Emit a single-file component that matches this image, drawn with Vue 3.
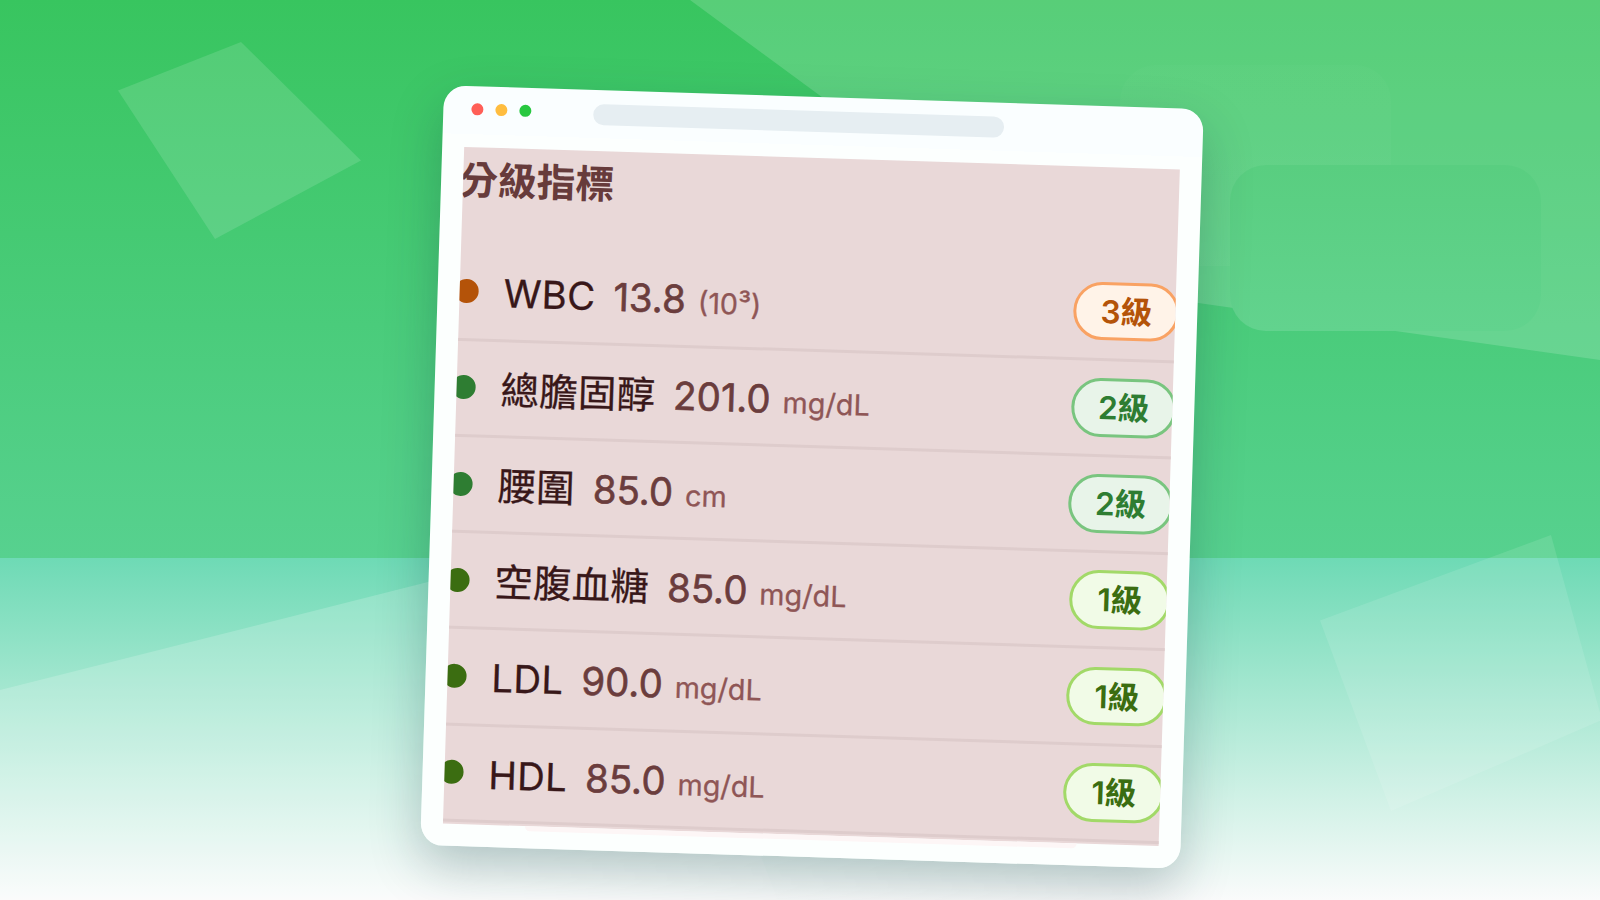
<template>
    <div class="scene">
        <svg class="backdrop" viewBox="0 0 1600 900" aria-hidden="true">
            <defs>
                <linearGradient id="sky" x1="0" y1="0" x2="0" y2="1">
                    <stop offset="0" stop-color="#38c55f" />
                    <stop offset="1" stop-color="#57d18f" />
                </linearGradient>
                <linearGradient id="floor" x1="0" y1="0" x2="0" y2="1">
                    <stop offset="0" stop-color="#6edab5" />
                    <stop offset="1" stop-color="#fafbfb" />
                </linearGradient>
                <linearGradient id="block" x1="0" y1="0" x2="0" y2="1">
                    <stop offset="0" stop-color="#59ce80" />
                    <stop offset="1" stop-color="#62d38e" />
                </linearGradient>
                <linearGradient id="haze" x1="0" y1="0" x2="0" y2="1">
                    <stop offset="0" stop-color="#fff" stop-opacity="0.015" />
                    <stop offset="1" stop-color="#fff" stop-opacity="0.03" />
                </linearGradient>
            </defs>
            <rect width="1600" height="558" fill="url(#sky)" />
            <rect y="558" width="1600" height="342" fill="url(#floor)" />
            <polygon points="690,0 1079,286 1600,360 1600,0" fill="#fff" opacity="0.16" />
            <polygon points="118,90.5 241,42 361,160.5 215,239" fill="#fff" opacity="0.13" />
            <polygon points="0,690 634,530 778,900 0,900" fill="#fff" opacity="0.19" />
            <polygon points="1320,620.5 1551,535 1602,720 1391,811" fill="#fff" opacity="0.11" />
            <rect x="1120" y="65" width="271" height="201" rx="36" fill="url(#haze)" />
            <rect x="1230" y="165" width="311" height="166" rx="36" fill="url(#block)" />
        </svg>

        <div class="window">
            <div class="titlebar">
                <span class="light red"></span>
                <span class="light yellow"></span>
                <span class="light green"></span>
                <span class="address"></span>
            </div>
            <div class="panel">
                <h2 class="title">分級指標</h2>
                <ul class="list">
                    <li v-for="item in items" :key="item.name" class="row" :class="`level-${item.level}`">
                        <span class="dot"></span>
                        <span class="name">{{ item.name }}</span>
                        <span class="value">{{ item.value }}</span>
                        <span class="unit">{{ item.unit }}</span>
                        <span class="badge">{{ item.level }}級</span>
                    </li>
                </ul>
            </div>
            <div class="sheet"></div>
        </div>
    </div>
</template>

<script setup>
const items = [
    { name: 'WBC', value: '13.8', unit: '(10³)', level: 3 },
    { name: '總膽固醇', value: '201.0', unit: 'mg/dL', level: 2 },
    { name: '腰圍', value: '85.0', unit: 'cm', level: 2 },
    { name: '空腹血糖', value: '85.0', unit: 'mg/dL', level: 1 },
    { name: 'LDL', value: '90.0', unit: 'mg/dL', level: 1 },
    { name: 'HDL', value: '85.0', unit: 'mg/dL', level: 1 },
];
</script>

<style scoped>
.scene {
    position: relative;
    box-sizing: border-box;
    width: 1600px;
    height: 900px;
    padding: 96.5px 0 0 431.5px;
    overflow: hidden;
    font-family: Inter, 'Noto Sans CJK TC', sans-serif;
}

.backdrop {
    position: absolute;
    inset: 0;
    width: 1600px;
    height: 900px;
}

.window {
    position: relative;
    box-sizing: border-box;
    width: 760px;
    height: 760px;
    padding: 0 22px;
    border-radius: 22px;
    background: linear-gradient(#fafeff 48px, #fcfffe 48px);
    box-shadow: 0 20px 50px rgba(20, 50, 60, 0.26);
    transform: rotate(1.8deg);
}

.titlebar {
    display: flex;
    align-items: center;
    box-sizing: border-box;
    gap: 12px;
    height: 48px;
    margin-bottom: 13.2px;
    padding: 0 6px 2px;
}

.light {
    width: 12px;
    height: 12px;
    border-radius: 50%;
}

.red {
    background: #ff5f57;
}

.yellow {
    background: #ffbd3f;
}

.green {
    background: #28c840;
}

.address {
    width: 411px;
    height: 21px;
    margin: 2px 0 0 50px;
    border-radius: 11px;
    background: #e6eef2;
}

.panel {
    height: 676.8px;
    overflow: hidden;
    background: #e9d8d8;
}

.title {
    height: 97.2px;
    margin: 0 0 0 -4px;
    color: #673b3b;
    font-size: 38.8px;
    font-weight: 700;
    line-height: 66px;
}

.list {
    margin: 0 -4px 0 -5px;
    padding: 0;
    list-style: none;
}

.row {
    display: flex;
    align-items: baseline;
    box-sizing: border-box;
    height: 96.25px;
    border-bottom: 3px solid #decccc;
    line-height: 97px;
    white-space: nowrap;
}

.dot {
    align-self: center;
    width: 24px;
    height: 24px;
    border-radius: 50%;
}

.name {
    margin-left: 25px;
    color: #381719;
    font-size: 38.4px;
    letter-spacing: 0.3px;
    -webkit-text-stroke: 0.3px;
}

.value {
    margin-left: 18px;
    color: #6b3d3d;
    font-size: 38.4px;
    -webkit-text-stroke: 0.6px;
}

.unit {
    margin-left: 12px;
    color: #8f5656;
    font-size: 28.8px;
    -webkit-text-stroke: 0.3px;
}

.badge {
    align-self: center;
    box-sizing: border-box;
    height: 58.6px;
    margin-left: auto;
    padding: 0 24px;
    border: 3px solid;
    border-radius: 30px;
    font-size: 31.6px;
    font-weight: 600;
    line-height: 53px;
}

.level-3 .dot {
    background: #b45309;
}

.level-3 .badge {
    border-color: #f9a263;
    background: #fff3e8;
    color: #b45309;
}

.level-2 .dot {
    background: #2e7d32;
}

.level-2 .badge {
    border-color: #79c57f;
    background: #e8f4e9;
    color: #2e7d32;
}

.level-1 .dot {
    background: #3b6d11;
}

.level-1 .badge {
    padding: 0 25px;
    border-color: #a2d968;
    background: #f1fbe7;
    color: #3b6d11;
}

.sheet {
    width: 552px;
    height: 5px;
    margin-left: 82px;
    border-radius: 0 0 12px 12px;
    background: #fdf6f6;
}
</style>

<style>
body {
    margin: 0;
}
</style>
